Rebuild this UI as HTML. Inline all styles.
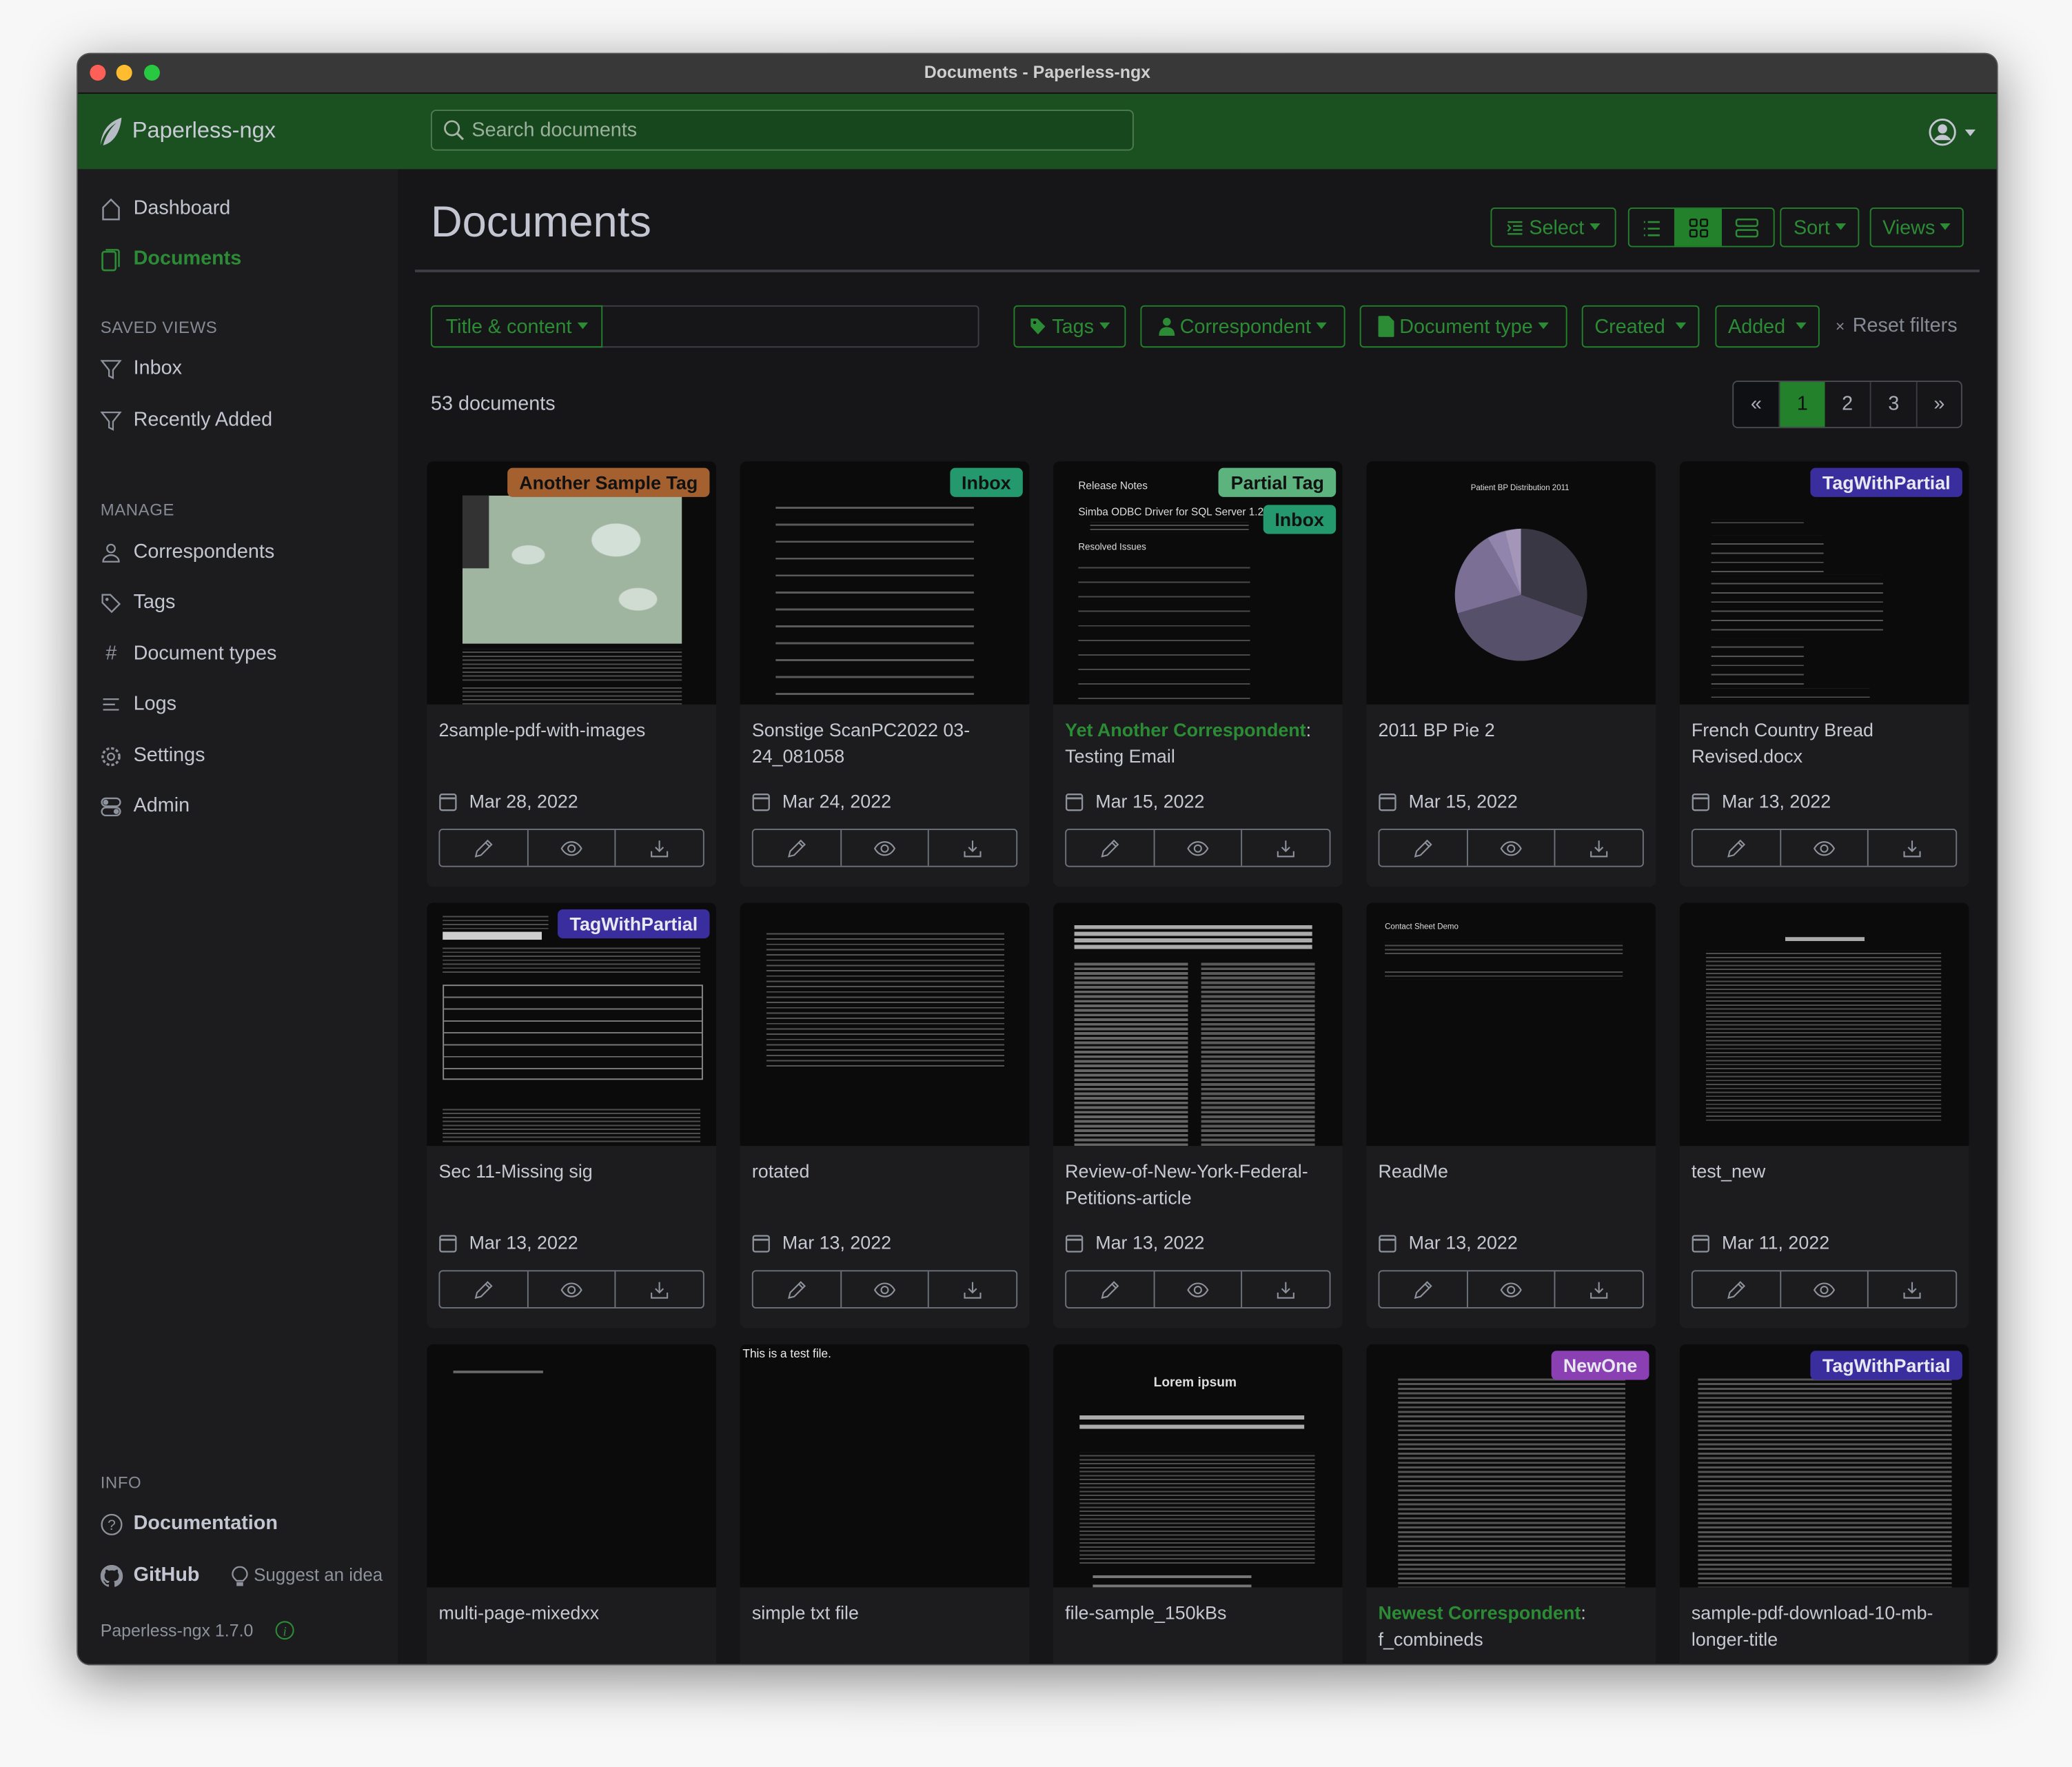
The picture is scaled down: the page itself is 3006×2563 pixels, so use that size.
<!DOCTYPE html>
<html><head><meta charset="utf-8">
<style>
html,body{margin:0;padding:0;width:3006px;height:2562px;overflow:hidden;background:#f2f2f2}
.s{position:absolute;left:0;top:0;width:1568px;height:1337px;transform:scale(1.91709);transform-origin:0 0;font-family:"Liberation Sans",sans-serif;background:radial-gradient(ellipse at center,#e6e6e6 0,#f7f7f7 70%)}
.win{position:absolute;left:58px;top:40px;width:1452px;height:1218px;border-radius:10px;overflow:hidden;background:#161618;box-shadow:0 10px 40px rgba(0,0,0,.45);border:1px solid #555}
.tb{position:absolute;left:0;top:0;right:0;height:29px;background:#383838;border-bottom:1px solid #111;color:#cfcfcf;font-size:13px;font-weight:bold;text-align:center;line-height:27px}
.dot{position:absolute;top:8px;width:12px;height:12px;border-radius:50%}
.hd{position:absolute;left:0;top:30px;right:0;height:57px;background:#1b5120}
.sb{position:absolute;left:0;top:87px;width:242px;bottom:0;background:#1c1c1e}
.a{position:absolute;white-space:nowrap}
.nav{position:absolute;left:17px;font-size:15px;color:#c3c6d1;white-space:nowrap}
.nav svg{position:absolute;left:0;top:1px}
.nav span{position:absolute;left:25px;top:0}
.cap{position:absolute;left:17px;font-size:12.5px;color:#858a95;letter-spacing:.3px}
.btn{position:absolute;border:1px solid #23812c;border-radius:3px;color:#2c8c35;font-size:15px;height:30px;line-height:30px;box-sizing:border-box;text-align:center;white-space:nowrap}
.car{display:inline-block;width:0;height:0;border-left:4px solid transparent;border-right:4px solid transparent;border-top:5px solid #2c8c35;vertical-align:3px;margin-left:4px}
.card{position:absolute;width:219px;height:322px;background:#1c1c1f;border-radius:5px;overflow:hidden}
.th{position:absolute;left:0;top:0;width:219px;height:184px;background:#0b0b0b;overflow:hidden}
.tt{position:absolute;left:9px;top:193px;width:205px;font-size:14px;line-height:20px;color:#c6c9d2}
.dt{position:absolute;left:9px;top:249px;font-size:14px;color:#c6c9d2}
.dt svg{position:absolute;left:0;top:1px}
.dt span{position:absolute;left:23px;top:0;white-space:nowrap}
.bg{position:absolute;left:9px;top:278px;width:201px;height:29px;border:1px solid #6c717a;border-radius:3px;box-sizing:border-box;display:flex}
.bg div{flex:1;border-right:1px solid #6c717a;display:flex;align-items:center;justify-content:center}
.bg div:last-child{border-right:none}
.tag{position:absolute;top:5px;right:5px;font-size:14px;font-weight:bold;padding:2px 9px;border-radius:4px;line-height:18px}
.ln{position:absolute;background:repeating-linear-gradient(#0b0b0b 0 3px,#6a6a6a 3px 4px)}
.ln2{position:absolute;background:repeating-linear-gradient(#0b0b0b 0 2px,#4d4d4d 2px 3px)}
.tl{position:absolute;left:27px;font-size:7px;color:#ddd;white-space:nowrap}
.gr{color:#2c8c35;font-weight:bold}
</style></head><body><div class="s">
<div class="win">
<div class="tb">Documents - Paperless-ngx</div>
<div class="dot" style="left:9px;background:#fe5f57"></div>
<div class="dot" style="left:29px;background:#febc2e"></div>
<div class="dot" style="left:50px;background:#28c840"></div>
<div class="hd">
 <svg class="a" style="left:15px;top:17px" width="20" height="24" viewBox="0 0 20 24"><path d="M18 1C9 4 3 10 2 22 4 14 8 9 14 5 9 10 6 15 4 22 12 20 17 12 18 1Z" fill="#b7bcc6"/></svg>
 <div class="a" style="left:41px;top:18px;font-size:17px;color:#c9ccd6">Paperless-ngx</div>
 <div class="a" style="left:267px;top:12px;width:532px;height:31px;border:1px solid #4f7a52;border-radius:4px;background:#17471c;box-sizing:border-box"></div>
 <svg class="a" style="left:276px;top:19px" width="17" height="17" viewBox="0 0 17 17"><circle cx="7" cy="7" r="5.3" stroke="#a7b5a8" stroke-width="1.4" fill="none"/><path d="M11 11l4.5 4.5" stroke="#a7b5a8" stroke-width="1.6"/></svg>
 <div class="a" style="left:298px;top:19px;font-size:15px;color:#9bb09d">Search documents</div>
 <svg class="a" style="left:1400px;top:18px" width="22" height="22" viewBox="0 0 22 22"><circle cx="11" cy="11" r="9.5" stroke="#c3c6d1" stroke-width="1.5" fill="none"/><circle cx="11" cy="8.5" r="3.5" fill="#c3c6d1"/><path d="M4.5 17c2-3 4-4 6.5-4s4.5 1 6.5 4" fill="#c3c6d1"/></svg>
 <div class="a" style="left:1428px;top:27px;border-left:4px solid transparent;border-right:4px solid transparent;border-top:5px solid #c3c6d1"></div>
</div>
<div class="sb">
 <div class="nav" style="top:21px"><svg width="16" height="17" viewBox="0 0 16 17"><path d="M2 16V7L8 1l6 6v9Z" stroke="#8d929c" stroke-width="1.3" fill="none"/></svg><span>Dashboard</span></div>
 <div class="nav" style="top:59px;color:#2c8c35;font-weight:bold"><svg width="16" height="18" viewBox="0 0 16 18"><rect x="1.5" y="2.5" width="10" height="14" rx="1.5" stroke="#2c8c35" stroke-width="1.4" fill="none"/><path d="M4 1h8.5a1.5 1.5 0 0 1 1.5 1.5V14" stroke="#2c8c35" stroke-width="1.3" fill="none"/></svg><span>Documents</span></div>
 <div class="cap" style="top:113px">SAVED VIEWS</div>
 <div class="nav" style="top:142px"><svg width="16" height="17" viewBox="0 0 16 17"><path d="M1 2h14L9.5 9v6l-3-1.5V9Z" stroke="#8d929c" stroke-width="1.2" fill="none"/></svg><span>Inbox</span></div>
 <div class="nav" style="top:181px"><svg width="16" height="17" viewBox="0 0 16 17"><path d="M1 2h14L9.5 9v6l-3-1.5V9Z" stroke="#8d929c" stroke-width="1.2" fill="none"/></svg><span>Recently Added</span></div>
 <div class="cap" style="top:251px">MANAGE</div>
 <div class="nav" style="top:281px"><svg width="16" height="17" viewBox="0 0 16 17"><circle cx="8" cy="5" r="3" stroke="#8d929c" stroke-width="1.2" fill="none"/><path d="M2 15c0-3 3-5 6-5s6 2 6 5Z" stroke="#8d929c" stroke-width="1.2" fill="none"/></svg><span>Correspondents</span></div>
 <div class="nav" style="top:319px"><svg width="16" height="17" viewBox="0 0 16 17"><path d="M1.5 2h6l7 7-6 6-7-7Z" stroke="#8d929c" stroke-width="1.2" fill="none"/><circle cx="5" cy="5.5" r="1.2" fill="#8d929c"/></svg><span>Tags</span></div>
 <div class="nav" style="top:358px"><span style="left:4px;color:#8d929c">#</span><span>Document types</span></div>
 <div class="nav" style="top:396px"><svg width="16" height="17" viewBox="0 0 16 17"><path d="M2 4h12M2 8h9M2 12h12" stroke="#8d929c" stroke-width="1.2"/></svg><span>Logs</span></div>
 <div class="nav" style="top:435px"><svg width="16" height="17" viewBox="0 0 16 17"><circle cx="8" cy="8.5" r="2.5" stroke="#8d929c" stroke-width="1.2" fill="none"/><circle cx="8" cy="8.5" r="6.3" stroke="#8d929c" stroke-width="1.8" stroke-dasharray="2.2 1.5" fill="none"/></svg><span>Settings</span></div>
 <div class="nav" style="top:473px"><svg width="16" height="17" viewBox="0 0 16 17"><rect x="1" y="2" width="14" height="6" rx="3" stroke="#8d929c" stroke-width="1.2" fill="none"/><rect x="1" y="9" width="14" height="6" rx="3" stroke="#8d929c" stroke-width="1.2" fill="none"/><circle cx="4" cy="5" r="2" fill="#8d929c"/><circle cx="12" cy="12" r="2" fill="#8d929c"/></svg><span>Admin</span></div>
 <div class="cap" style="top:987px">INFO</div>
 <div class="nav" style="top:1016px"><svg width="17" height="17" viewBox="0 0 17 17"><circle cx="8.5" cy="8.5" r="7.5" stroke="#8d929c" stroke-width="1.2" fill="none"/><text x="8.5" y="12.5" font-size="11" fill="#8d929c" text-anchor="middle" font-family="Liberation Sans">?</text></svg><span style="font-weight:bold">Documentation</span></div>
 <div class="nav" style="top:1055px"><svg width="17" height="17" viewBox="0 0 16 16"><path fill="#8d929c" d="M8 0C3.58 0 0 3.58 0 8c0 3.54 2.29 6.53 5.470 7.59.4.07.55-.17.55-.38v-1.33c-2.230.48-2.7-1.07-2.7-1.07-.36-.92-.89-1.17-.89-1.17-.73-.5.06-.49.06-.49.8.06 1.23.83 1.23.83.72 1.23 1.88.87 2.34.67.07-.52.28-.87.51-1.07-1.78-.2-3.64-.89-3.64-3.95 0-.87.31-1.59.82-2.15-.08-.2-.36-1.02.08-2.12 0 0 .67-.21 2.2.82.64-.18 1.32-.27 2-.27.68 0 1.36.09 2 .27 1.53-1.04 2.2-.82 2.2-.82.44 1.1.16 1.92.08 2.12.51.56.82 1.27.82 2.15 0 3.07-1.87 3.75-3.65 3.95.29.25.54.73.54 1.48v2.2c0 .21.15.46.55.38A8.01 8.01 0 0 0 16 8c0-4.42-3.58-8-8-8Z"/></svg><span style="font-weight:bold">GitHub</span></div>
 <svg class="a" style="left:116px;top:1057px" width="13" height="16" viewBox="0 0 13 16"><path d="M4 11C2 9 1 8 1 6a5.5 5.5 0 0 1 11 0c0 2-1 3-3 5Z" stroke="#8d929c" stroke-width="1.2" fill="none"/><rect x="4" y="12" width="5" height="3" fill="#8d929c"/></svg>
 <div class="a" style="left:133px;top:1056px;font-size:13.5px;color:#8d929c">Suggest an idea</div>
 <div class="a" style="left:17px;top:1098px;font-size:13px;color:#8d929c">Paperless-ngx 1.7.0</div>
 <svg class="a" style="left:149px;top:1098px" width="15" height="15" viewBox="0 0 15 15"><circle cx="7.5" cy="7.5" r="6.5" stroke="#2c8c35" stroke-width="1.1" fill="none"/><text x="7.5" y="11.5" font-size="10" font-style="italic" fill="#2c8c35" text-anchor="middle" font-family="Liberation Serif">i</text></svg>
</div>
<!-- main -->
<div class="a" style="left:267px;top:108px;font-size:33px;color:#c3c6d1">Documents</div>
<div class="a" style="left:255px;top:163px;width:1184px;height:2px;background:#3e3f44"></div>
<div class="btn" style="left:1069px;top:116px;width:95px"><svg style="vertical-align:-2px;margin-right:4px" width="13" height="13" viewBox="0 0 13 13"><path d="M1 2h11M5 5h7M5 8h7M1 11h11M1 4l2 2.5L1 9" stroke="#2c8c35" stroke-width="1.2" fill="none"/></svg>Select<span class="car"></span></div>
<div class="btn" style="left:1173px;top:116px;width:111px;overflow:hidden">
 <div class="a" style="left:34px;top:0;width:36px;height:30px;background:#23812c"></div>
 <svg class="a" style="left:10px;top:8px" width="14" height="14" viewBox="0 0 14 14"><path d="M1 2h1M1 7h1M1 12h1M4 2h9M4 7h9M4 12h9" stroke="#2c8c35" stroke-width="1.4"/></svg>
 <svg class="a" style="left:45px;top:7px" width="15" height="15" viewBox="0 0 15 15"><rect x="1" y="1" width="5" height="5" rx="1" stroke="#111" stroke-width="1.3" fill="none"/><rect x="9" y="1" width="5" height="5" rx="1" stroke="#111" stroke-width="1.3" fill="none"/><rect x="1" y="9" width="5" height="5" rx="1" stroke="#111" stroke-width="1.3" fill="none"/><rect x="9" y="9" width="5" height="5" rx="1" stroke="#111" stroke-width="1.3" fill="none"/></svg>
 <svg class="a" style="left:80px;top:7px" width="18" height="15" viewBox="0 0 18 15"><rect x="1" y="1" width="16" height="5" rx="1.5" stroke="#2c8c35" stroke-width="1.3" fill="none"/><rect x="1" y="9" width="16" height="5" rx="1.5" stroke="#2c8c35" stroke-width="1.3" fill="none"/></svg>
</div>
<div class="btn" style="left:1288px;top:116px;width:60px">Sort<span class="car"></span></div>
<div class="btn" style="left:1356px;top:116px;width:71px">Views<span class="car"></span></div>

<div class="a" style="left:267px;top:190px;width:415px;height:32px;border:1px solid #3e3f44;border-radius:3px;box-sizing:border-box"></div>
<div class="btn" style="left:267px;top:190px;width:130px;height:32px;line-height:31px;border-radius:3px 0 0 3px">Title &amp; content<span class="car"></span></div>
<div class="btn" style="left:708px;top:190px;width:85px;height:32px;line-height:31px"><svg style="vertical-align:-2px;margin-right:4px" width="13" height="14" viewBox="0 0 13 14"><path d="M1 1h5l6 6-5.5 6L1 7Z" fill="#2c8c35"/><circle cx="4" cy="4" r="1.2" fill="#161618"/></svg>Tags<span class="car"></span></div>
<div class="btn" style="left:804px;top:190px;width:155px;height:32px;line-height:31px"><svg style="vertical-align:-2px;margin-right:4px" width="12" height="14" viewBox="0 0 12 14"><circle cx="6" cy="3.5" r="3" fill="#2c8c35"/><path d="M0 14c0-4 2-6.5 6-6.5s6 2.5 6 6.5Z" fill="#2c8c35"/></svg>Correspondent<span class="car"></span></div>
<div class="btn" style="left:970px;top:190px;width:157px;height:32px;line-height:31px"><svg style="vertical-align:-3px;margin-right:4px" width="12" height="16" viewBox="0 0 12 16"><path d="M1 0h7l4 4v11a1 1 0 0 1-1 1H1a1 1 0 0 1-1-1V1a1 1 0 0 1 1-1Z" fill="#2c8c35"/></svg>Document type<span class="car"></span></div>
<div class="btn" style="left:1138px;top:190px;width:89px;height:32px;line-height:31px">Created <span class="car"></span></div>
<div class="btn" style="left:1239px;top:190px;width:79px;height:32px;line-height:31px">Added <span class="car"></span></div>
<div class="a" style="left:1330px;top:197px;font-size:15px;color:#858a95"><span style="font-size:12px;margin-right:6px">×</span>Reset filters</div>

<div class="a" style="left:267px;top:256px;font-size:15px;color:#c3c6d1">53 documents</div>
<div class="a" style="left:1252px;top:247px;width:174px;height:36px;border:1px solid #4a4c52;border-radius:4px;overflow:hidden;box-sizing:border-box;display:flex;font-size:15px;color:#a9adb7;line-height:34px;text-align:center">
 <div style="width:34px;background:#0e1013;border-right:1px solid #3a3c41">«</div>
 <div style="width:34px;background:#23812c;color:#111">1</div>
 <div style="width:34px;border-right:1px solid #3a3c41">2</div>
 <div style="width:34px;border-right:1px solid #3a3c41">3</div>
 <div style="flex:1">»</div>
</div>

<!-- ROW 1 -->
<div class="card" style="left:264px;top:308px">
 <div class="th">
  <div class="a" style="left:27px;top:26px;width:166px;height:112px;background:#9fb5a0;background-image:radial-gradient(ellipse at 30% 40%,#cfdcd4 0 12px,transparent 13px),radial-gradient(ellipse at 70% 30%,#d3e0d8 0 18px,transparent 19px),radial-gradient(ellipse at 80% 70%,#d0dbd2 0 14px,transparent 15px)"></div>
  <div class="a" style="left:27px;top:26px;width:20px;height:55px;background:#333"></div>
  <div class="ln2" style="left:27px;top:142px;width:166px;height:24px"></div>
  <div class="ln2" style="left:27px;top:169px;width:166px;height:15px"></div>
  <div class="tag" style="background:#a4602f;color:#111">Another Sample Tag</div>
 </div>
 <div class="tt">2sample-pdf-with-images</div>
 <div class="dt"><svg width="14" height="15" viewBox="0 0 14 15"><rect x="1" y="2" width="12" height="12" rx="1.5" stroke="#8d929c" stroke-width="1.2" fill="none"/><path d="M1 5h12" stroke="#8d929c" stroke-width="1.5"/></svg><span>Mar 28, 2022</span></div>
 <div class="bg"><div><svg width="14" height="14" viewBox="0 0 14 14"><path d="M10 1l3 3-8 8-4 1 1-4Z M8.5 2.5l3 3" stroke="#8d929c" stroke-width="1.1" fill="none"/></svg></div><div><svg width="17" height="12" viewBox="0 0 17 12"><path d="M1 6C3 2.5 5.5 1 8.5 1S14 2.5 16 6C14 9.5 11.5 11 8.5 11S3 9.5 1 6Z" stroke="#8d929c" stroke-width="1.1" fill="none"/><circle cx="8.5" cy="6" r="2.6" stroke="#8d929c" stroke-width="1.1" fill="none"/></svg></div><div><svg width="14" height="14" viewBox="0 0 14 14"><path d="M7 1v8M4 6l3 3 3-3M1 9v4h12V9" stroke="#8d929c" stroke-width="1.1" fill="none"/></svg></div></div>
</div>
<div class="card" style="left:501px;top:308px">
 <div class="th">
  <div class="ln" style="left:27px;top:26px;width:150px;height:160px;background:repeating-linear-gradient(#0b0b0b 0 8.5px,#5a5a5a 8.5px 10px,#0b0b0b 10px 12.8px)"></div>
  <div class="tag" style="background:#23996d;color:#111">Inbox</div>
 </div>
 <div class="tt">Sonstige ScanPC2022 03-24_081058</div>
 <div class="dt"><svg width="14" height="15" viewBox="0 0 14 15"><rect x="1" y="2" width="12" height="12" rx="1.5" stroke="#8d929c" stroke-width="1.2" fill="none"/><path d="M1 5h12" stroke="#8d929c" stroke-width="1.5"/></svg><span>Mar 24, 2022</span></div>
 <div class="bg"><div><svg width="14" height="14" viewBox="0 0 14 14"><path d="M10 1l3 3-8 8-4 1 1-4Z M8.5 2.5l3 3" stroke="#8d929c" stroke-width="1.1" fill="none"/></svg></div><div><svg width="17" height="12" viewBox="0 0 17 12"><path d="M1 6C3 2.5 5.5 1 8.5 1S14 2.5 16 6C14 9.5 11.5 11 8.5 11S3 9.5 1 6Z" stroke="#8d929c" stroke-width="1.1" fill="none"/><circle cx="8.5" cy="6" r="2.6" stroke="#8d929c" stroke-width="1.1" fill="none"/></svg></div><div><svg width="14" height="14" viewBox="0 0 14 14"><path d="M7 1v8M4 6l3 3 3-3M1 9v4h12V9" stroke="#8d929c" stroke-width="1.1" fill="none"/></svg></div></div>
</div>
<div class="card" style="left:738px;top:308px">
 <div class="th">
  <div class="tl" style="left:19px;top:14px;font-size:8px">Release Notes</div>
  <div class="tl" style="left:19px;top:34px;font-size:8px">Simba ODBC Driver for SQL Server 1.2.3</div>
  <div class="ln2" style="left:28px;top:46px;width:120px;height:8px"></div>
  <div class="tl" style="left:19px;top:62px">Resolved Issues</div>
  <div class="ln2" style="left:19px;top:75px;width:130px;height:110px;background:repeating-linear-gradient(#0b0b0b 0 5px,#4a4a4a 5px 6px,#0b0b0b 6px 11px)"></div>
  <div class="tag" style="background:#5db37e;color:#111">Partial Tag</div>
  <div class="tag" style="top:33px;background:#23996d;color:#111">Inbox</div>
 </div>
 <div class="tt"><span class="gr">Yet Another Correspondent</span>: Testing Email</div>
 <div class="dt"><svg width="14" height="15" viewBox="0 0 14 15"><rect x="1" y="2" width="12" height="12" rx="1.5" stroke="#8d929c" stroke-width="1.2" fill="none"/><path d="M1 5h12" stroke="#8d929c" stroke-width="1.5"/></svg><span>Mar 15, 2022</span></div>
 <div class="bg"><div><svg width="14" height="14" viewBox="0 0 14 14"><path d="M10 1l3 3-8 8-4 1 1-4Z M8.5 2.5l3 3" stroke="#8d929c" stroke-width="1.1" fill="none"/></svg></div><div><svg width="17" height="12" viewBox="0 0 17 12"><path d="M1 6C3 2.5 5.5 1 8.5 1S14 2.5 16 6C14 9.5 11.5 11 8.5 11S3 9.5 1 6Z" stroke="#8d929c" stroke-width="1.1" fill="none"/><circle cx="8.5" cy="6" r="2.6" stroke="#8d929c" stroke-width="1.1" fill="none"/></svg></div><div><svg width="14" height="14" viewBox="0 0 14 14"><path d="M7 1v8M4 6l3 3 3-3M1 9v4h12V9" stroke="#8d929c" stroke-width="1.1" fill="none"/></svg></div></div>
</div>
<div class="card" style="left:975px;top:308px">
 <div class="th">
  <div class="tl" style="left:79px;top:18px;font-size:6px">Patient BP Distribution 2011</div>
  <svg class="a" style="left:64px;top:48px" width="106" height="106" viewBox="-53 -53 106 106"><circle r="50" fill="#57506a"/><path d="M0 0V-50A50 50 0 0 1 47 17Z" fill="#3a3744"/><path d="M0 0L-48 14A50 50 0 0 1-25-43Z" fill="#7b6f95"/><path d="M0 0L-25-43A50 50 0 0 1-12-48Z" fill="#9285ad"/><path d="M0 0L-12-48A50 50 0 0 1 0-50Z" fill="#a396b8"/></svg>
 </div>
 <div class="tt">2011 BP Pie 2</div>
 <div class="dt"><svg width="14" height="15" viewBox="0 0 14 15"><rect x="1" y="2" width="12" height="12" rx="1.5" stroke="#8d929c" stroke-width="1.2" fill="none"/><path d="M1 5h12" stroke="#8d929c" stroke-width="1.5"/></svg><span>Mar 15, 2022</span></div>
 <div class="bg"><div><svg width="14" height="14" viewBox="0 0 14 14"><path d="M10 1l3 3-8 8-4 1 1-4Z M8.5 2.5l3 3" stroke="#8d929c" stroke-width="1.1" fill="none"/></svg></div><div><svg width="17" height="12" viewBox="0 0 17 12"><path d="M1 6C3 2.5 5.5 1 8.5 1S14 2.5 16 6C14 9.5 11.5 11 8.5 11S3 9.5 1 6Z" stroke="#8d929c" stroke-width="1.1" fill="none"/><circle cx="8.5" cy="6" r="2.6" stroke="#8d929c" stroke-width="1.1" fill="none"/></svg></div><div><svg width="14" height="14" viewBox="0 0 14 14"><path d="M7 1v8M4 6l3 3 3-3M1 9v4h12V9" stroke="#8d929c" stroke-width="1.1" fill="none"/></svg></div></div>
</div>
<div class="card" style="left:1212px;top:308px">
 <div class="th">
  <div class="ln2" style="left:24px;top:44px;width:70px;height:3px"></div>
  <div class="ln2" style="left:24px;top:56px;width:85px;height:30px;background:repeating-linear-gradient(#0b0b0b 0 6px,#555 6px 7px)"></div>
  <div class="ln2" style="left:24px;top:86px;width:130px;height:42px;background:repeating-linear-gradient(#0b0b0b 0 6px,#555 6px 7px)"></div>
  <div class="ln2" style="left:24px;top:134px;width:70px;height:35px;background:repeating-linear-gradient(#0b0b0b 0 6px,#555 6px 7px)"></div>
  <div class="ln2" style="left:24px;top:172px;width:120px;height:10px;background:repeating-linear-gradient(#0b0b0b 0 6px,#555 6px 7px)"></div>
  <div class="tag" style="background:#3a2e9e;color:#e8e8f0">TagWithPartial</div>
 </div>
 <div class="tt">French Country Bread Revised.docx</div>
 <div class="dt"><svg width="14" height="15" viewBox="0 0 14 15"><rect x="1" y="2" width="12" height="12" rx="1.5" stroke="#8d929c" stroke-width="1.2" fill="none"/><path d="M1 5h12" stroke="#8d929c" stroke-width="1.5"/></svg><span>Mar 13, 2022</span></div>
 <div class="bg"><div><svg width="14" height="14" viewBox="0 0 14 14"><path d="M10 1l3 3-8 8-4 1 1-4Z M8.5 2.5l3 3" stroke="#8d929c" stroke-width="1.1" fill="none"/></svg></div><div><svg width="17" height="12" viewBox="0 0 17 12"><path d="M1 6C3 2.5 5.5 1 8.5 1S14 2.5 16 6C14 9.5 11.5 11 8.5 11S3 9.5 1 6Z" stroke="#8d929c" stroke-width="1.1" fill="none"/><circle cx="8.5" cy="6" r="2.6" stroke="#8d929c" stroke-width="1.1" fill="none"/></svg></div><div><svg width="14" height="14" viewBox="0 0 14 14"><path d="M7 1v8M4 6l3 3 3-3M1 9v4h12V9" stroke="#8d929c" stroke-width="1.1" fill="none"/></svg></div></div>
</div>
<!-- ROW 2 -->
<div class="card" style="left:264px;top:642px">
 <div class="th">
  <div class="ln2" style="left:12px;top:8px;width:80px;height:12px"></div>
  <div class="a" style="left:12px;top:22px;width:75px;height:6px;background:#cfcfcf"></div>
  <div class="ln2" style="left:12px;top:32px;width:195px;height:22px"></div>
  <div class="a" style="left:12px;top:62px;width:195px;height:70px;border:1px solid #888;background:repeating-linear-gradient(#0b0b0b 0 8px,#777 8px 9px)"></div>
  <div class="ln2" style="left:12px;top:154px;width:195px;height:28px"></div>
  <div class="tag" style="background:#3a2e9e;color:#e8e8f0">TagWithPartial</div>
 </div>
 <div class="tt">Sec 11-Missing sig</div>
 <div class="dt"><svg width="14" height="15" viewBox="0 0 14 15"><rect x="1" y="2" width="12" height="12" rx="1.5" stroke="#8d929c" stroke-width="1.2" fill="none"/><path d="M1 5h12" stroke="#8d929c" stroke-width="1.5"/></svg><span>Mar 13, 2022</span></div>
 <div class="bg"><div><svg width="14" height="14" viewBox="0 0 14 14"><path d="M10 1l3 3-8 8-4 1 1-4Z M8.5 2.5l3 3" stroke="#8d929c" stroke-width="1.1" fill="none"/></svg></div><div><svg width="17" height="12" viewBox="0 0 17 12"><path d="M1 6C3 2.5 5.5 1 8.5 1S14 2.5 16 6C14 9.5 11.5 11 8.5 11S3 9.5 1 6Z" stroke="#8d929c" stroke-width="1.1" fill="none"/><circle cx="8.5" cy="6" r="2.6" stroke="#8d929c" stroke-width="1.1" fill="none"/></svg></div><div><svg width="14" height="14" viewBox="0 0 14 14"><path d="M7 1v8M4 6l3 3 3-3M1 9v4h12V9" stroke="#8d929c" stroke-width="1.1" fill="none"/></svg></div></div>
</div>
<div class="card" style="left:501px;top:642px">
 <div class="th"><div class="ln2" style="left:20px;top:20px;width:180px;height:104px;background:repeating-linear-gradient(#0b0b0b 0 3px,#555 3px 4px)"></div></div>
 <div class="tt">rotated</div>
 <div class="dt"><svg width="14" height="15" viewBox="0 0 14 15"><rect x="1" y="2" width="12" height="12" rx="1.5" stroke="#8d929c" stroke-width="1.2" fill="none"/><path d="M1 5h12" stroke="#8d929c" stroke-width="1.5"/></svg><span>Mar 13, 2022</span></div>
 <div class="bg"><div><svg width="14" height="14" viewBox="0 0 14 14"><path d="M10 1l3 3-8 8-4 1 1-4Z M8.5 2.5l3 3" stroke="#8d929c" stroke-width="1.1" fill="none"/></svg></div><div><svg width="17" height="12" viewBox="0 0 17 12"><path d="M1 6C3 2.5 5.5 1 8.5 1S14 2.5 16 6C14 9.5 11.5 11 8.5 11S3 9.5 1 6Z" stroke="#8d929c" stroke-width="1.1" fill="none"/><circle cx="8.5" cy="6" r="2.6" stroke="#8d929c" stroke-width="1.1" fill="none"/></svg></div><div><svg width="14" height="14" viewBox="0 0 14 14"><path d="M7 1v8M4 6l3 3 3-3M1 9v4h12V9" stroke="#8d929c" stroke-width="1.1" fill="none"/></svg></div></div>
</div>
<div class="card" style="left:738px;top:642px">
 <div class="th">
  <div class="a" style="left:16px;top:15px;width:180px;height:22px;background:repeating-linear-gradient(#0b0b0b 0 2px,#aaa 2px 5px)"></div>
  <div class="ln2" style="left:16px;top:44px;width:86px;height:140px;background:repeating-linear-gradient(#0b0b0b 0 1.5px,#666 1.5px 3.5px)"></div>
  <div class="ln2" style="left:112px;top:44px;width:86px;height:140px;background:repeating-linear-gradient(#0b0b0b 0 1.5px,#5a5a5a 1.5px 3.5px)"></div>
 </div>
 <div class="tt">Review-of-New-York-Federal-Petitions-article</div>
 <div class="dt"><svg width="14" height="15" viewBox="0 0 14 15"><rect x="1" y="2" width="12" height="12" rx="1.5" stroke="#8d929c" stroke-width="1.2" fill="none"/><path d="M1 5h12" stroke="#8d929c" stroke-width="1.5"/></svg><span>Mar 13, 2022</span></div>
 <div class="bg"><div><svg width="14" height="14" viewBox="0 0 14 14"><path d="M10 1l3 3-8 8-4 1 1-4Z M8.5 2.5l3 3" stroke="#8d929c" stroke-width="1.1" fill="none"/></svg></div><div><svg width="17" height="12" viewBox="0 0 17 12"><path d="M1 6C3 2.5 5.5 1 8.5 1S14 2.5 16 6C14 9.5 11.5 11 8.5 11S3 9.5 1 6Z" stroke="#8d929c" stroke-width="1.1" fill="none"/><circle cx="8.5" cy="6" r="2.6" stroke="#8d929c" stroke-width="1.1" fill="none"/></svg></div><div><svg width="14" height="14" viewBox="0 0 14 14"><path d="M7 1v8M4 6l3 3 3-3M1 9v4h12V9" stroke="#8d929c" stroke-width="1.1" fill="none"/></svg></div></div>
</div>
<div class="card" style="left:975px;top:642px">
 <div class="th"><div class="tl" style="left:14px;top:16px;font-size:6px">Contact Sheet Demo</div><div class="ln2" style="left:14px;top:30px;width:180px;height:10px"></div><div class="ln2" style="left:14px;top:50px;width:180px;height:8px"></div></div>
 <div class="tt">ReadMe</div>
 <div class="dt"><svg width="14" height="15" viewBox="0 0 14 15"><rect x="1" y="2" width="12" height="12" rx="1.5" stroke="#8d929c" stroke-width="1.2" fill="none"/><path d="M1 5h12" stroke="#8d929c" stroke-width="1.5"/></svg><span>Mar 13, 2022</span></div>
 <div class="bg"><div><svg width="14" height="14" viewBox="0 0 14 14"><path d="M10 1l3 3-8 8-4 1 1-4Z M8.5 2.5l3 3" stroke="#8d929c" stroke-width="1.1" fill="none"/></svg></div><div><svg width="17" height="12" viewBox="0 0 17 12"><path d="M1 6C3 2.5 5.5 1 8.5 1S14 2.5 16 6C14 9.5 11.5 11 8.5 11S3 9.5 1 6Z" stroke="#8d929c" stroke-width="1.1" fill="none"/><circle cx="8.5" cy="6" r="2.6" stroke="#8d929c" stroke-width="1.1" fill="none"/></svg></div><div><svg width="14" height="14" viewBox="0 0 14 14"><path d="M7 1v8M4 6l3 3 3-3M1 9v4h12V9" stroke="#8d929c" stroke-width="1.1" fill="none"/></svg></div></div>
</div>
<div class="card" style="left:1212px;top:642px">
 <div class="th"><div class="a" style="left:80px;top:26px;width:60px;height:3px;background:#aaa"></div><div class="ln2" style="left:20px;top:36px;width:178px;height:130px"></div></div>
 <div class="tt">test_new</div>
 <div class="dt"><svg width="14" height="15" viewBox="0 0 14 15"><rect x="1" y="2" width="12" height="12" rx="1.5" stroke="#8d929c" stroke-width="1.2" fill="none"/><path d="M1 5h12" stroke="#8d929c" stroke-width="1.5"/></svg><span>Mar 11, 2022</span></div>
 <div class="bg"><div><svg width="14" height="14" viewBox="0 0 14 14"><path d="M10 1l3 3-8 8-4 1 1-4Z M8.5 2.5l3 3" stroke="#8d929c" stroke-width="1.1" fill="none"/></svg></div><div><svg width="17" height="12" viewBox="0 0 17 12"><path d="M1 6C3 2.5 5.5 1 8.5 1S14 2.5 16 6C14 9.5 11.5 11 8.5 11S3 9.5 1 6Z" stroke="#8d929c" stroke-width="1.1" fill="none"/><circle cx="8.5" cy="6" r="2.6" stroke="#8d929c" stroke-width="1.1" fill="none"/></svg></div><div><svg width="14" height="14" viewBox="0 0 14 14"><path d="M7 1v8M4 6l3 3 3-3M1 9v4h12V9" stroke="#8d929c" stroke-width="1.1" fill="none"/></svg></div></div>
</div>
<!-- ROW 3 -->
<div class="card" style="left:264px;top:976px">
 <div class="th"><div class="a" style="left:20px;top:20px;width:68px;height:2px;background:#666"></div></div>
 <div class="tt">multi-page-mixedxx</div>
</div>
<div class="card" style="left:501px;top:976px">
 <div class="th"><div class="tl" style="left:2px;top:2px;font-size:9px;color:#eee">This is a test file.</div></div>
 <div class="tt">simple txt file</div>
</div>
<div class="card" style="left:738px;top:976px">
 <div class="th">
  <div class="tl" style="left:76px;top:24px;font-size:10px;font-weight:bold">Lorem ipsum</div>
  <div class="a" style="left:20px;top:52px;width:170px;height:14px;background:repeating-linear-gradient(#0b0b0b 0 2px,#aaa 2px 5px,#0b0b0b 5px 7px)"></div>
  <div class="ln2" style="left:20px;top:82px;width:178px;height:86px"></div>
  <div class="ln2" style="left:30px;top:170px;width:120px;height:14px;background:repeating-linear-gradient(#0b0b0b 0 5px,#777 5px 7px)"></div>
 </div>
 <div class="tt">file-sample_150kBs</div>
</div>
<div class="card" style="left:975px;top:976px">
 <div class="th"><div class="ln2" style="left:24px;top:24px;width:172px;height:160px;background:repeating-linear-gradient(#0b0b0b 0 2px,#555 2px 3.5px)"></div>
 <div class="tag" style="background:#8a3fb3;color:#e8e8f0">NewOne</div></div>
 <div class="tt"><span class="gr">Newest Correspondent</span>: f_combineds</div>
</div>
<div class="card" style="left:1212px;top:976px">
 <div class="th"><div class="ln2" style="left:14px;top:24px;width:192px;height:160px;background:repeating-linear-gradient(#0b0b0b 0 2px,#555 2px 3.5px)"></div>
 <div class="tag" style="background:#3a2e9e;color:#e8e8f0">TagWithPartial</div></div>
 <div class="tt">sample-pdf-download-10-mb-longer-title</div>
</div>
</div>
</div>
</body></html>
